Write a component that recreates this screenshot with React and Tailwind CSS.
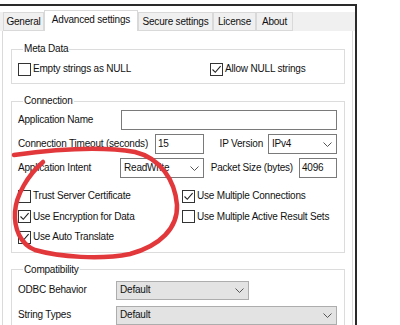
import React from "react";

const Box = ({ checked }) => (
  <span className="w-[13px] h-[13px] border border-[#333] bg-white flex items-center justify-center shrink-0">
    {checked && (
      <svg width="11" height="11" viewBox="0 0 11 11">
        <path d="M1.5 5.5 L4.3 8.3 L9.6 2.2" fill="none" stroke="#222" strokeWidth="1.1" />
      </svg>
    )}
  </span>
);

const CheckRow = ({ checked, label }) => (
  <div className="flex items-center gap-[2px] h-full">
    <Box checked={checked} />
    <span className="whitespace-nowrap">{label}</span>
  </div>
);

const Chevron = () => (
  <svg width="9" height="5" viewBox="0 0 9 5" className="shrink-0">
    <path d="M0.5 0.5 L4.5 4.5 L8.5 0.5" fill="none" stroke="#555" strokeWidth="1" />
  </svg>
);

const Input = ({ value, className }) => (
  <div className={"h-[20px] border border-[#7a7a7a] bg-white flex items-center px-[2px] " + className}>
    {value}
  </div>
);

const Combo = ({ value, className, gray }) => (
  <div
    className={
      "h-[20px] border flex items-center justify-between pl-[3px] pr-[4px] " +
      (gray ? "bg-[#e3e3e3] border-[#adadad] " : "bg-white border-[#7a7a7a] ") +
      className
    }
  >
    <span>{value}</span>
    <Chevron />
  </div>
);

const Tab = ({ label, w, selected }) => (
  <div
    className={
      "flex items-center justify-center border-t border-x border-[#d9d9d9] whitespace-nowrap " +
      (selected ? "bg-white h-[21px] pb-[3px]" : "bg-[#f0f0f0] h-[19px] border-b pt-[1px]") +
      " " +
      w
    }
  >
    {label}
  </div>
);

export default function App() {
  return (
    <div
      className="relative w-[400px] h-[325px] bg-white overflow-hidden text-[10px] leading-[14px] tracking-[-0.2px] text-[#111]"
      style={{ fontFamily: '"Liberation Sans", Arial, sans-serif' }}
    >
      <div className="mt-[4px] w-[357px] h-[330px] border-t-2 border-r-2 border-[#2a2a2a]">
        <div className="mt-[6px] h-[19px] bg-[#f0f0f0] flex items-end pl-[3px]">
          <Tab label="General" w="w-[41px]" />
          <Tab label="Advanced settings" w="w-[94px]" selected />
          <Tab label="Secure settings" w="w-[75px]" />
          <Tab label="License" w="w-[43px]" />
          <Tab label="About" w="w-[37px]" />
        </div>
        <div className="ml-[2px] w-[351px] h-[300px] border-x border-[#dadada] bg-white pt-[11px] pl-[8px]">
          <fieldset className="w-[334px] border border-[#dcdcdc] pl-[6px] pr-[7px] pt-[6px] pb-[7px]">
            <legend className="ml-[5px] px-[1px]">Meta Data</legend>
            <div className="grid grid-cols-[192px_1fr] h-[14px]">
              <CheckRow label="Empty strings as NULL" />
              <CheckRow checked label="Allow NULL strings" />
            </div>
          </fieldset>

          <fieldset className="mt-[10px] w-[334px] border border-[#dcdcdc] pl-[6px] pr-[7px] pt-[2px] pb-[4px]">
            <legend className="ml-[5px] px-[1px]">Connection</legend>
            <div className="flex flex-col gap-[4px]">
              <div className="flex items-center">
                <span className="w-[103px] whitespace-nowrap">Application Name</span>
                <Input value="" className="flex-1" />
              </div>
              <div className="flex items-center">
                <span className="w-[137px] whitespace-nowrap">Connection Timeout (seconds)</span>
                <Input value="15" className="w-[49px]" />
                <span className="ml-auto mr-[5px] whitespace-nowrap">IP Version</span>
                <Combo value="IPv4" className="w-[69px]" />
              </div>
              <div className="flex items-center">
                <span className="w-[102px] whitespace-nowrap">Application Intent</span>
                <Combo value="ReadWrite" className="w-[84px]" />
                <span className="ml-auto mr-[6px] whitespace-nowrap">Packet Size (bytes)</span>
                <Input value="4096" className="w-[38px]" />
              </div>
            </div>
            <div className="mt-[8px] grid grid-cols-[164px_1fr] auto-rows-[20.5px]">
              <CheckRow label="Trust Server Certificate" />
              <CheckRow checked label="Use Multiple Connections" />
              <CheckRow checked label="Use Encryption for Data" />
              <CheckRow label="Use Multiple Active Result Sets" />
              <CheckRow checked label="Use Auto Translate" />
            </div>
          </fieldset>

          <fieldset className="mt-[10px] w-[334px] border border-[#dcdcdc] pl-[6px] pr-[7px] pt-[4px] pb-[8px]">
            <legend className="ml-[5px] px-[1px]">Compatibility</legend>
            <div className="flex flex-col gap-[6px]">
              <div className="flex items-center">
                <span className="w-[98px] whitespace-nowrap">ODBC Behavior</span>
                <Combo gray value="Default" className="w-[133px] !h-[19px]" />
              </div>
              <div className="flex items-center">
                <span className="w-[98px] whitespace-nowrap">String Types</span>
                <Combo gray value="Default" className="flex-1 !h-[19px]" />
              </div>
            </div>
          </fieldset>
        </div>
      </div>

      <svg
        className="absolute left-0 top-0 pointer-events-none"
        width="400"
        height="325"
        viewBox="0 0 400 325"
      >
        <path
          d="M 14 155 C 50 150, 100 146, 135 152 C 160 158, 175 180, 177 205 C 178 228, 160 246, 130 254 C 100 260, 60 257, 35 250 C 20 244, 14 228, 15 212 C 16 195, 28 175, 43 162"
          fill="none"
          stroke="#e2383c"
          strokeWidth="4.5"
          strokeLinecap="round"
        />
      </svg>
    </div>
  );
}
